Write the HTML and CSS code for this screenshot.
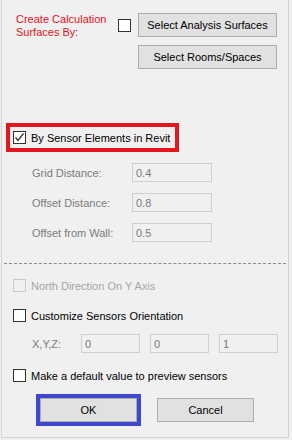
FILE: index.html
```html
<!DOCTYPE html>
<html lang="en">
<head>
    <meta charset="UTF-8">
    <meta name="viewport" content="width=device-width, initial-scale=1.0">
    <title>Sensor Settings</title>
    <link rel="stylesheet" href="styles.css">
</head>
<body>

<div class="panel">
    <div class="create">
        <div class="create-label">Create Calculation<br>Surfaces By:</div>
        <span class="box create-box"></span>
        <div class="create-buttons">
            <button class="btn">Select Analysis Surfaces</button>
            <button class="btn">Select Rooms/Spaces</button>
        </div>
    </div>

    <div class="sensor-pick">
        <span class="box">
            <svg width="11" height="11" viewBox="0 0 11 11"><polyline points="1.5,5.5 4,8.5 9.5,1.5" fill="none" stroke="#333" stroke-width="1.3"/></svg>
        </span>
        <span>By Sensor Elements in Revit</span>
    </div>

    <div class="fields">
        <div class="field"><span class="field-label">Grid Distance:</span><span class="input wide">0.4</span></div>
        <div class="field"><span class="field-label">Offset Distance:</span><span class="input wide">0.8</span></div>
        <div class="field"><span class="field-label">Offset from Wall:</span><span class="input wide">0.5</span></div>
    </div>

    <div class="divider"></div>

    <div class="check-row disabled north"><span class="box"></span><span>North Direction On Y Axis</span></div>
    <div class="check-row customize"><span class="box"></span><span>Customize Sensors Orientation</span></div>

    <div class="xyz">
        <span class="xyz-label">X,Y,Z:</span>
        <span class="input small">0</span>
        <span class="input small">0</span>
        <span class="input small">1</span>
    </div>

    <div class="check-row preview"><span class="box"></span><span>Make a default value to preview sensors</span></div>

    <div class="actions">
        <div class="ok-frame"><button class="btn">OK</button></div>
        <button class="btn">Cancel</button>
    </div>
</div>

</body>
</html>
```

FILE: styles.css
```css
body {
    margin: 0;
    background-color: #f0f0f0;
    font-family: "Liberation Sans", Arial, sans-serif;
    font-size: 11px;
    color: #000;
}
.panel {
    margin-left: 1px;
    width: 288px;
    height: 438px;
    box-sizing: border-box;
    border: 1px solid #d4d4d4;
    border-top: none;
}
.box {
    display: inline-flex;
    align-items: center;
    justify-content: center;
    width: 13px;
    height: 13px;
    box-sizing: border-box;
    border: 1px solid #333;
    background-color: #fff;
    flex-shrink: 0;
}
.btn {
    display: block;
    width: 97px;
    height: 24px;
    padding: 0;
    font-family: inherit;
    font-size: 11px;
    color: #000;
    background-color: #e1e1e1;
    border: 1px solid #adadad;
}
.create {
    display: flex;
    padding: 13px 0 0 14px;
}
.create-label {
    width: 102px;
    line-height: 13px;
    color: #e8101c;
}
.create-box {
    margin-top: 6px;
}
.create-buttons {
    display: flex;
    flex-direction: column;
    gap: 8px;
    margin-left: 7px;
}
.create-buttons .btn {
    width: 139px;
}
.sensor-pick {
    display: flex;
    align-items: center;
    gap: 5px;
    width: 173px;
    height: 29px;
    box-sizing: border-box;
    margin: 54px 0 0 4px;
    padding-left: 3px;
    border: 4px solid #e3161e;
}
.fields {
    display: flex;
    flex-direction: column;
    gap: 11px;
    margin-top: 11px;
    padding-left: 30px;
}
.field {
    display: flex;
    align-items: center;
}
.field-label {
    width: 100px;
    color: #7a7a7a;
}
.input {
    display: flex;
    align-items: center;
    height: 19px;
    box-sizing: border-box;
    padding-left: 3px;
    border: 1px solid #cfcfcf;
    color: #7a7a7a;
}
.input.wide {
    width: 80px;
}
.input.small {
    width: 59px;
}
.divider {
    width: 282px;
    margin: 21px 0 0 2px;
    border-top: 1px dashed #8a8a8a;
}
.check-row {
    display: flex;
    align-items: center;
    gap: 5px;
    height: 13px;
    padding-left: 11px;
}
.check-row.north {
    margin-top: 15px;
}
.check-row.customize {
    margin-top: 17px;
}
.check-row.preview {
    margin-top: 16px;
}
.check-row.disabled {
    color: #a6a6a6;
}
.check-row.disabled .box {
    border-color: #c8c8c8;
    background-color: #f0f0f0;
}
.xyz {
    display: flex;
    align-items: center;
    gap: 10px;
    margin-top: 12px;
    padding-left: 30px;
}
.xyz-label {
    width: 37px;
    margin-right: 2px;
    color: #7a7a7a;
}
.actions {
    display: flex;
    align-items: center;
    gap: 16px;
    margin: 12px 0 0 34px;
}
.ok-frame {
    border: 4px solid #3f48cc;
}
```
